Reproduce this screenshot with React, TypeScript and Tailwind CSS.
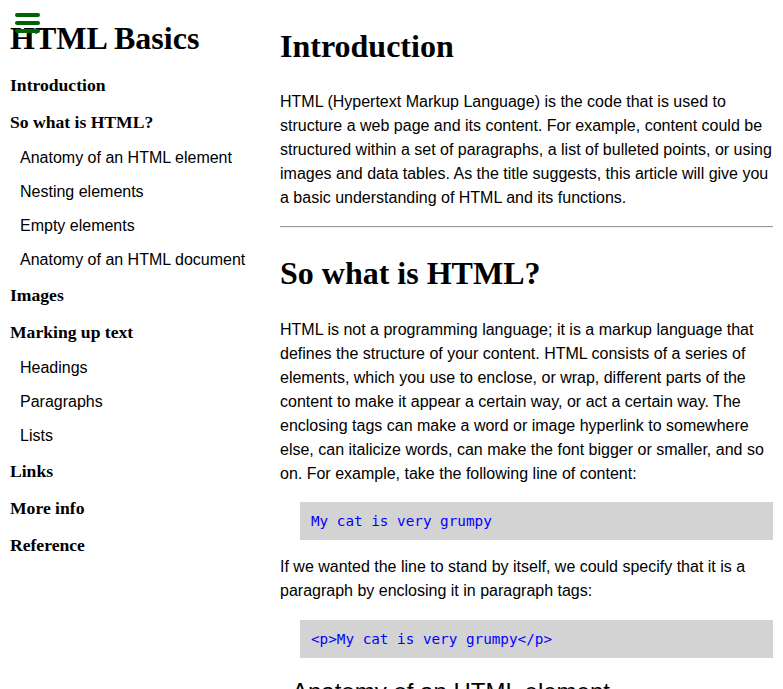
import { useState } from "react";

interface INavItem {
  label: string;
  sub?: boolean;
}

const navItems: INavItem[] = [
  { label: "Introduction" },
  { label: "So what is HTML?" },
  { label: "Anatomy of an HTML element", sub: true },
  { label: "Nesting elements", sub: true },
  { label: "Empty elements", sub: true },
  { label: "Anatomy of an HTML document", sub: true },
  { label: "Images" },
  { label: "Marking up text" },
  { label: "Headings", sub: true },
  { label: "Paragraphs", sub: true },
  { label: "Lists", sub: true },
  { label: "Links" },
  { label: "More info" },
  { label: "Reference" },
];

const serif = "font-['Liberation_Serif','Times_New_Roman',serif]";
const sans = "font-['Liberation_Sans',Arial,sans-serif]";
const mono = "font-['DejaVu_Sans_Mono',Consolas,monospace]";

function CodeBlock({ children }: { children: string }) {
  return (
    <pre
      className={`${mono} ml-[20px] bg-[#d3d3d3] pl-[11px] py-[10px] text-[14.3px] leading-[18px] text-[blue]`}
    >
      {children}
    </pre>
  );
}

function App() {
  const [menuOpen, setMenuOpen] = useState<boolean>(true);

  return (
    <div className={`${sans} relative min-h-screen bg-white text-black`}>
      <button
        onClick={() => setMenuOpen((prev) => !prev)}
        className="absolute left-[15px] top-[13px] flex w-[25px] flex-col gap-[4px]"
        aria-label="Toggle menu"
      >
        <span className="block h-[4px] w-[25px] rounded-full bg-[#006400]" />
        <span className="block h-[4px] w-[25px] rounded-full bg-[#006400]" />
        <span className="block h-[4px] w-[25px] rounded-full bg-[#006400]" />
      </button>

      <div className="flex">
        {menuOpen && (
          <nav className="w-[270px] shrink-0 pl-[10px]">
            <h1
              className={`${serif} mt-[20px] text-[32px] font-bold leading-[36px]`}
            >
              HTML Basics
            </h1>
            <ul className="mt-[10.5px]">
              {navItems.map((item) =>
                item.sub ? (
                  <li
                    key={item.label}
                    className={`${sans} pl-[10px] text-[16px] leading-[34px]`}
                  >
                    <a href="#">{item.label}</a>
                  </li>
                ) : (
                  <li
                    key={item.label}
                    className={`${serif} text-[17.6px] font-bold leading-[37px]`}
                  >
                    <a href="#">{item.label}</a>
                  </li>
                )
              )}
            </ul>
          </nav>
        )}

        <main className="min-w-0 flex-1 px-[10px] text-[16px] leading-[24px]">
          <h1
            className={`${serif} mt-[28px] text-[32px] font-bold leading-[36px]`}
          >
            Introduction
          </h1>
          <p className="mt-[26px]">
            HTML (Hypertext Markup Language) is the code that is used to
            structure a web page and its content. For example, content could be
            structured within a set of paragraphs, a list of bulleted points, or
            using images and data tables. As the title suggests, this article
            will give you a basic understanding of HTML and its functions.
          </p>
          <hr className="mt-[16px] h-[2px] border-0 border-t border-b border-t-[#9a9a9a] border-b-[#eeeeee]" />

          <h1
            className={`${serif} mt-[27px] text-[32px] font-bold leading-[36px]`}
          >
            So what is HTML?
          </h1>
          <p className="mt-[27px]">
            HTML is not a programming language; it is a markup language that
            defines the structure of your content. HTML consists of a series of
            elements, which you use to enclose, or wrap, different parts of the
            content to make it appear a certain way, or act a certain way. The
            enclosing tags can make a word or image hyperlink to somewhere else,
            can italicize words, can make the font bigger or smaller, and so on.
            For example, take the following line of content:
          </p>
          <div className="mt-[16px]">
            <CodeBlock>My cat is very grumpy</CodeBlock>
          </div>
          <p className="mt-[15px]">
            If we wanted the line to stand by itself, we could specify that it
            is a paragraph by enclosing it in paragraph tags:
          </p>
          <div className="mt-[17px]">
            <CodeBlock>{"<p>My cat is very grumpy</p>"}</CodeBlock>
          </div>

          <h2 className="ml-[12px] mt-[20px] text-[24px] leading-[27.6px]">
            Anatomy of an HTML element
          </h2>
          <p className="mt-[16px] pb-[40px]">
            Let's explore our paragraph element a bit further.
          </p>
        </main>
      </div>
    </div>
  );
}

export default App;
